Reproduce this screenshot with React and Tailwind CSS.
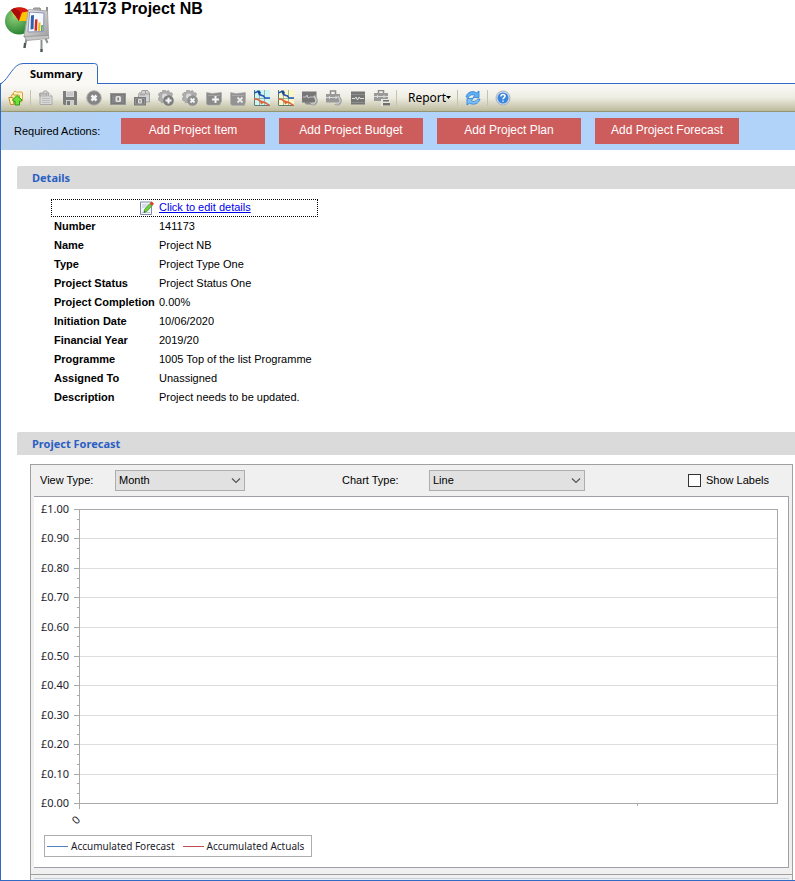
import React from "react";

const Icon = ({ children }) => (
  <svg viewBox="0 0 16 16" className="w-4 h-4" aria-hidden="true">
    {children}
  </svg>
);

const FolderUpIcon = () => (
  <Icon>
    <path d="M5.500 5V2.500L7 1l1.500 1H14l.5 1v8l-2 1.500" fill="#fdf3c0" stroke="#d9a440" />
    <path d="M3 6.500L4.500 4 6 5h5l.5.500V13H3z" fill="#fbe9a5" stroke="#d19a35" />
    <path d="M.8 7.500h4l1.200 7H2.500z" fill="#fff3bd" stroke="#c88d2b" />
    <path d="M9 5.500l5 4.500-1.500 1.500-1-.500v4H7v-4l-1 .500L4.500 10z" fill="#6fe03a" stroke="#2c9a16" />
  </Icon>
);

const NewIcon = () => (
  <Icon>
    <path d="M2 3h3l1-2h3v2h2l3 3v8.500H2z" fill="#d9d9d9" stroke="#a9a9a9" />
    <path d="M1 3h8.500v3.500H1z" fill="#adadad" />
    <path d="M3 5h5" stroke="#cfcfcf" />
    <path d="M10.500 2.500v3.500h3.500" fill="#efefef" stroke="#a9a9a9" />
    <path d="M4 8.500h8M4 10.500h8M4 12.500h8" stroke="#bababa" />
  </Icon>
);

const SaveIcon = () => (
  <Icon>
    <path d="M1 1h13l1 1v13H2l-1-1z" fill="#7d7d7d" />
    <path d="M4 1h8v6H4z" fill="#d9d9d9" />
    <path d="M5 3h6M5 5h6" stroke="#b5b5b5" />
    <path d="M4 10h8v5H4z" fill="#cfcfcf" />
    <path d="M5 11h3v4H5z" fill="#777" />
  </Icon>
);

const CancelIcon = () => (
  <Icon>
    <circle cx="8" cy="8" r="7.300" fill="#858585" stroke="#b4b4b4" />
    <path d="M5.500 5.500l5 5M10.500 5.500l-5 5" stroke="#f5f5f5" strokeWidth="2.600" />
  </Icon>
);

const BudgetIcon = () => (
  <Icon>
    <path d="M0 3h16v12H0z" fill="#969696" />
    <path d="M1.500 4.500h13v9h-13z" fill="#858585" stroke="#777" />
    <rect x="5.500" y="6" width="5.500" height="6" rx="1.500" fill="#e2e2e2" />
    <path d="M8.200 7.500v3" stroke="#777" strokeWidth="1.500" />
  </Icon>
);

const BudgetCopyIcon = () => (
  <Icon>
    <path d="M4.500 7l.5-4h2l1-2.500h5.500l2 2.500v9H4.500z" fill="#d2d2d2" stroke="#a0a0a0" />
    <path d="M6 3.500h5v2H6z" fill="#a8a8a8" />
    <path d="M11.500 1v3h3.500" fill="none" stroke="#a0a0a0" />
    <path d="M0 7h12v8.500H0z" fill="#7b7b7b" />
    <path d="M1.500 8.500h9v5.500h-9z" fill="none" stroke="#949494" />
    <rect x="4" y="9" width="4" height="4.500" rx="1" fill="#dedede" />
    <path d="M6 10v2.500" stroke="#777" />
  </Icon>
);

const gearPath = "M4.500 .5L7 0l1 1.500 2.500-1L12 3l2-.2L14.500 5 13 6.500l1 2-2 4.500H7l-1-1-2.500 1L3 11 .8 10.500.5 8 1.500 6.500 0 4.500 2 2.500h2z";

const GearIcon = ({ badge, children }) => (
  <Icon>
    <path d={gearPath} fill="#adadad" stroke="#949494" strokeWidth=".6" />
    <circle cx="6.800" cy="6.300" r="2.800" fill="#d9d9d9" />
    <circle cx="10.500" cy="10.500" r="5.300" fill={badge} />
    {children}
  </Icon>
);

const GearAddIcon = () => (
  <GearIcon badge="#7c7c7c">
    <path d="M10.500 7.500v6M7.500 10.500h6" stroke="#f6f6f6" strokeWidth="2" />
  </GearIcon>
);

const GearRemoveIcon = () => (
  <GearIcon badge="#8f8f8f">
    <path d="M8.500 8.500l4 4M12.500 8.500l-4 4" stroke="#f3f3f3" strokeWidth="1.800" />
  </GearIcon>
);

const CardAddIcon = () => (
  <Icon>
    <path d="M.5 2.500l5.500 1 9.500-1v9l-2 3.500H2L.5 14z" fill="#8a8a8a" stroke="#a5a5a5" strokeWidth=".6" />
    <path d="M2 5.500h12" stroke="#a4a4a4" />
    <path d="M9.500 6v7M6 9.500h7" stroke="#f3f3f3" strokeWidth="2" />
  </Icon>
);

const CardRemoveIcon = () => (
  <Icon>
    <path d="M.5 2.500l5.500 1 9.500-1v9l-1 4H2L.5 14z" fill="#939393" stroke="#adadad" strokeWidth=".6" />
    <path d="M2 5.500h12" stroke="#a9a9a9" />
    <path d="M7.500 7.500l5 5M12.500 7.500l-5 5" stroke="#e9e9e9" strokeWidth="1.800" />
  </Icon>
);

const PlanChart = ({ fill }) => (
  <Icon>
    <rect width="16" height="16" fill={fill} />
    <path d="M5.500 0v16M10.500 0v16M0 8.500h16" stroke="#7fa79b" strokeWidth=".8" />
    <path d="M.5 0v15.500H16" stroke="#567d76" fill="none" />
    <path d="M0 3l4-1.500L6.500 5l3 1 1.500 2h5" stroke="#2457b8" strokeWidth="1.500" fill="none" />
    <path d="M3.500 0L7 2 5 6z" fill="#17428f" />
    <path d="M0 9l4 .5 3 2.500 4 .5 4.500 3" stroke="#e0653a" strokeWidth="1.600" fill="none" />
    <path d="M6 10l5 2-4 2.500z" fill="#e0653a" />
  </Icon>
);

const LinkRing = () => (
  <>
    <path d="M9 13.500c3 2 6-.5 5.500-3.500L12 5.500" stroke="#a2a2a2" strokeWidth="2.600" fill="none" />
    <path d="M8.500 13c3 2 5.500 0 5.500-3L12 6" stroke="#dcdcdc" strokeWidth="1" fill="none" />
  </>
);

const MonitorLinkIcon = () => (
  <Icon>
    <path d="M0 1.500h14.500v11H0z" fill="#777" />
    <path d="M1 7h3l1-2 1 3 2-1h5" stroke="#c7c7c7" fill="none" />
    <path d="M2 12h8v2.500H4z" fill="#888" />
    <LinkRing />
  </Icon>
);

const CaseLinkIcon = () => (
  <Icon>
    <path d="M4.500 4V1h5v3" stroke="#8d8d8d" strokeWidth="1.500" fill="none" />
    <path d="M0 4h14v8.500H0z" fill="#999" />
    <path d="M0 7.500h14M3.500 6v3M10 6v3" stroke="#dadada" />
    <LinkRing />
  </Icon>
);

const MonitorIcon = () => (
  <Icon>
    <path d="M1 1.500h14v13H1z" fill="#757575" />
    <path d="M1 4.500h14M1 12.500h14" stroke="#8d8d8d" />
    <path d="M2 8.500h3l1-1.500 1.500 3 1.500-3 1 1.500h4" stroke="#e2e2e2" fill="none" />
  </Icon>
);

const CaseRemoveIcon = () => (
  <Icon>
    <path d="M4.500 3V.5h5V3" stroke="#8d8d8d" strokeWidth="1.500" fill="none" />
    <path d="M0 3h14v8H0z" fill="#999" />
    <path d="M0 6.500h14M3.500 5v3M10 5v3" stroke="#dadada" />
    <path d="M7 9h9v7H7z" fill="#e9e8df" />
    <path d="M9 10h6v1.500H9zM9 13h7v2.500H9z" fill="#6f6f6f" />
  </Icon>
);

const RefreshIcon = () => (
  <Icon>
    <path d="M1 7C2 2.500 7 0 11.500 2.800L14 1v6.500H8l1.800-2C7.500 4 4.500 5 3.500 7.500z" fill="#5fb0f5" stroke="#2c7fd6" strokeWidth=".8" />
    <path d="M15 9c-1 4.500-6 6.500-10.500 4.200L2 15V8.500h6.200L6.200 10.700c2.300 1.500 5.300.5 6.300-1.700z" fill="#7cc0f8" stroke="#2c7fd6" strokeWidth=".8" />
  </Icon>
);

const HelpIcon = () => (
  <Icon>
    <circle cx="8" cy="8" r="7" fill="#d5dde8" stroke="#9dabc0" strokeWidth=".9" />
    <circle cx="8" cy="8" r="5.500" fill="#3b86dd" />
    <path d="M6 6.500C6 3.800 10 4 10 6.300c0 1.200-2 1.400-2 2.900M8 10.500v1.300" stroke="#fff" strokeWidth="1.500" fill="none" />
  </Icon>
);

const EditIcon = () => (
  <svg viewBox="0 0 14 14" className="w-3.5 h-3.5" aria-hidden="true">
    <path d="M.5 1h11v12.500H.5z" fill="#f3f5fa" stroke="#7f8ca8" />
    <path d="M2 4h7M2 6h5M2 11.500h8" stroke="#bcc5d6" />
    <path d="M4 11.500l.5-3L10 2.500l2.200 2L6.800 10.500z" fill="#6fd03c" stroke="#3f8f2b" strokeWidth=".7" />
    <path d="M9.800 2.500L11.500.5l2.500 2-1.600 2.200z" fill="#e5392b" />
    <path d="M4 11.500l.3-1.500 1.200 1.100z" fill="#333" />
  </svg>
);

const ProjectLogo = () => (
  <svg viewBox="0 0 48 50" className="w-12 h-[50px]" aria-hidden="true">
    <defs>
      <radialGradient id="pie" cx="35%" cy="35%" r="75%">
        <stop offset="0" stopColor="#8fd07a" />
        <stop offset="1" stopColor="#1c7a28" />
      </radialGradient>
      <linearGradient id="frame" x1="0" y1="0" x2="1" y2="1">
        <stop offset="0" stopColor="#f4f4f4" />
        <stop offset="1" stopColor="#9e9e9e" />
      </linearGradient>
    </defs>
    <ellipse cx="15" cy="17" rx="14" ry="13.500" fill="url(#pie)" />
    <path d="M15 17L7 6C10 3 20 1 26 8z" fill="#d8190f" />
    <path d="M15 17l-8-11 3.500-2 6 4z" fill="#a80c08" />
    <path d="M15 17L18 8.500l6-1c3 2 5 5.500 5 9.500z" fill="#ffc400" />
    <path d="M6.500 6.500l3 5 5.500 5.500z" fill="#ffd21a" />
    <path d="M22.500 35l-2 9M37.500 36v12M41 33l2.500 6" stroke="#8b938c" strokeWidth="2" />
    <path d="M21 39l-.5 5M37.500 45v3" stroke="#4c5b4f" strokeWidth="2.200" />
    <path d="M29 6l1-2h6l1 3" fill="#aaa" stroke="#8b8b8b" />
    <path d="M43 3v6" stroke="#8e8e8e" strokeWidth="2" />
    <path d="M24.500 5.500l19 1.500 1 25-24.500 1z" fill="url(#frame)" stroke="#a8a8a8" />
    <path d="M25.500 8l14.500 1-.5 18.500-15.500.5z" fill="#f5f8ff" stroke="#8c93b8" />
    <path d="M20 32.500l24.500-1 .5 3-22 2z" fill="#c6c6c6" stroke="#888" strokeWidth=".6" />
    <path d="M27 11.500l3-.5-.5 14-3 .5z" fill="#2b62ad" />
    <path d="M31 15.500l2.500-.3-.5 11.500H30.500z" fill="#d62a1d" />
    <path d="M34.500 18.500h2l-.3 8.500H34z" fill="#eeb81c" />
    <path d="M37.300 21h1.500l-.3 6H37z" fill="#3fa045" />
  </svg>
);

const toolbarItems = [
  { label: "New", icon: <NewIcon /> },
  { label: "Save", icon: <SaveIcon /> },
  { label: "Cancel", icon: <CancelIcon /> },
  { label: "Budget", icon: <BudgetIcon /> },
  { label: "Copy budget", icon: <BudgetCopyIcon /> },
  { label: "Add item", icon: <GearAddIcon /> },
  { label: "Remove item", icon: <GearRemoveIcon /> },
  { label: "Add card", icon: <CardAddIcon /> },
  { label: "Remove card", icon: <CardRemoveIcon /> },
  { label: "Plan", icon: <PlanChart fill="#cdf5f2" /> },
  { label: "Plan baseline", icon: <PlanChart fill="#fdf6c4" /> },
  { label: "Link forecast", icon: <MonitorLinkIcon /> },
  { label: "Link case", icon: <CaseLinkIcon /> },
  { label: "Forecast", icon: <MonitorIcon /> },
  { label: "Remove case", icon: <CaseRemoveIcon /> },
];

const actions = ["Add Project Item", "Add Project Budget", "Add Project Plan", "Add Project Forecast"];

const details = [
  ["Number", "141173"],
  ["Name", "Project NB"],
  ["Type", "Project Type One"],
  ["Project Status", "Project Status One"],
  ["Project Completion", "0.00%"],
  ["Initiation Date", "10/06/2020"],
  ["Financial Year", "2019/20"],
  ["Programme", "1005 Top of the list Programme"],
  ["Assigned To", "Unassigned"],
  ["Description", "Project needs to be updated."],
];

const axisLabels = ["£1.00", "£0.90", "£0.80", "£0.70", "£0.60", "£0.50", "£0.40", "£0.30", "£0.20", "£0.10", "£0.00"];

const ToolButton = ({ label, children }) => (
  <button type="button" aria-label={label} className="w-6 h-6 flex items-center justify-center">
    {children}
  </button>
);

const Separator = () => <div className="w-px h-4 ml-0.5 mr-[3px] bg-[#c5c3b0]" />;

const SectionHeader = ({ children }) => (
  <h2 className="ml-4 h-[23px] pl-[15px] pt-0.5 flex items-center rounded-tl-[2px] bg-[#dadada] font-['Noto_Sans',sans-serif] text-[11px] font-bold text-[#2a5fc4]">
    {children}
  </h2>
);

const Select = ({ id, value, className }) => (
  <div className={`relative ${className}`}>
    <select id={id} defaultValue={value} className="block w-full h-[21px] pl-[3px] appearance-none rounded-none border border-[#adadad] bg-[#e1e1e1] text-[11px] text-black">
      <option>{value}</option>
    </select>
    <svg viewBox="0 0 10 6" className="absolute right-1 top-2 w-2.5 h-1.5 pointer-events-none" aria-hidden="true">
      <path d="M1 .5l4 4 4-4" fill="none" stroke="#555" strokeWidth="1.200" />
    </svg>
  </div>
);

const ForecastChart = () => {
  const yFor = (step) => 12 + Math.round(step * 29.4);
  const minorTicks = Array.from({ length: 30 }, (_, i) => i).filter((i) => i % 3 !== 0);

  return (
    <svg viewBox="0 0 754 330" className="block w-full" role="img" aria-label="Project forecast chart">
      <g shapeRendering="crispEdges">
        {axisLabels.slice(1, -1).map((label, i) => (
          <rect key={label} x="46" y={yFor(i + 1)} width="697" height="1" fill="#dedede" />
        ))}
        {axisLabels.map((label, i) => (
          <rect key={label} x="40" y={yFor(i)} width="5" height="1" fill="#a9a9a9" />
        ))}
        {minorTicks.map((i) => (
          <rect key={i} x="43" y={yFor(i / 3)} width="2" height="1" fill="#a9a9a9" />
        ))}
        <rect x="45" y="12" width="699" height="1" fill="#a9a9a9" />
        <rect x="45" y="306" width="699" height="1" fill="#a9a9a9" />
        <rect x="45" y="12" width="1" height="300" fill="#a9a9a9" />
        <rect x="743" y="12" width="1" height="295" fill="#a9a9a9" />
        <rect x="603" y="307" width="1" height="2" fill="#a9a9a9" />
      </g>
      <g className="font-['Noto_Sans',sans-serif] text-[11px]" fill="#1c1c2c">
        {axisLabels.map((label, i) => (
          <text key={label} x="35" y={yFor(i) + 4} textAnchor="end">
            {label}
          </text>
        ))}
        <text x="42" y="327" textAnchor="middle" transform="rotate(-45 42 323)">
          0
        </text>
      </g>
    </svg>
  );
};

const LegendItem = ({ color, children }) => (
  <div className="flex items-center gap-[3px]">
    <span className={`w-[21px] h-px ${color}`} />
    {children}
  </div>
);

const App = () => {
  return (
    <div className="bg-white font-['Liberation_Sans',Arial,sans-serif] text-[11px] text-black">
      {/* Title */}
      <header className="flex h-[63px] pl-1 pt-1 gap-3">
        <ProjectLogo />
        <h1 className="text-base leading-none font-bold -mt-1 pt-px">141173 Project NB</h1>
      </header>

      {/* Tab */}
      <nav className="relative z-10 h-5">
        <button type="button" className="relative w-[100px] h-[21px] pl-[30px] pt-0.5 flex items-center font-['Noto_Sans',sans-serif] text-[11px] font-bold">
          <svg viewBox="0 0 100 21" className="absolute inset-0 w-full h-full" aria-hidden="true">
            <path d="M1 21C9 16 13 .5 23 .5H94.500Q97.500 .5 97.500 3.500V21z" fill="#faf9f6" />
            <path d="M1 20.500C9 16 13 .5 23 .5H94.500Q97.500 .5 97.500 3.500V21" fill="none" stroke="#316ac5" />
          </svg>
          <span className="relative">Summary</span>
        </button>
      </nav>

      <main className="border border-r-0 border-[#316ac5]">
        {/* Toolbar */}
        <div className="h-7 pl-[3px] flex items-center bg-gradient-to-b from-[#faf9f7] via-[#eeede3] to-[#bdbb9c] border-b border-[#94946f]">
          <ToolButton label="Open folder">
            <FolderUpIcon />
          </ToolButton>
          <Separator />
          {toolbarItems.map((item) => (
            <ToolButton key={item.label} label={item.label}>
              {item.icon}
            </ToolButton>
          ))}
          <Separator />
          <button type="button" className="w-[55px] pl-2 flex items-center font-['Noto_Sans',sans-serif] text-xs">
            Report
            <svg viewBox="0 0 5 3" className="w-[5px] h-[3px] shrink-0" aria-hidden="true">
              <path d="M0 0h5L2.500 3z" />
            </svg>
          </button>
          <Separator />
          <ToolButton label="Refresh">
            <RefreshIcon />
          </ToolButton>
          <Separator />
          <ToolButton label="Help">
            <HelpIcon />
          </ToolButton>
        </div>

        {/* Required actions */}
        <div className="h-[38px] pl-[13px] flex items-center bg-gradient-to-r from-[#b8d0ec] to-[#b1d2f9] to-15%">
          <span className="w-[107px]">Required Actions:</span>
          <div className="flex gap-3.5">
            {actions.map((action) => (
              <button key={action} type="button" className="w-36 h-[26px] pb-0.5 bg-[#cd5c5c] text-xs text-white">
                {action}
              </button>
            ))}
          </div>
        </div>

        {/* Details */}
        <section className="pt-4">
          <SectionHeader>Details</SectionHeader>
          <div className="ml-[50px] mt-2.5">
            <div className="w-[267px] h-[18px] pl-[88px] flex items-center gap-[5px] border border-dotted border-black">
              <EditIcon />
              <a href="#edit" className="pb-0.5 text-[#0000ee] underline">
                Click to edit details
              </a>
            </div>
            <table>
              <tbody>
                {details.map(([label, value]) => (
                  <tr key={label} className="leading-[19px]">
                    <th scope="row" className="w-[108px] pl-[3px] text-left font-bold whitespace-nowrap">
                      {label}
                    </th>
                    <td>{value}</td>
                  </tr>
                ))}
              </tbody>
            </table>
          </div>
        </section>

        {/* Project forecast */}
        <section className="pt-[25px]">
          <SectionHeader>Project Forecast</SectionHeader>
          <div className="ml-[29px] mr-0.5 mt-[9px] border border-b-0 border-[#a0a0a0] bg-[#f0f0f0]">
            <div className="h-[31px] pl-[9px] pr-[23px] flex items-center">
              <label htmlFor="view-type" className="w-[75px]">
                View Type:
              </label>
              <Select id="view-type" value="Month" className="w-[130px]" />
              <label htmlFor="chart-type" className="w-[87px] ml-[97px]">
                Chart Type:
              </label>
              <Select id="chart-type" value="Line" className="w-[156px]" />
              <label className="ml-auto flex items-center gap-[5px]">
                <input type="checkbox" className="w-[13px] h-[13px] appearance-none border border-[#333] bg-white" />
                Show Labels
              </label>
            </div>

            <div className="ml-[3px] mr-[3px] pb-2.5 bg-white border border-l-0 border-[#a0a0a8]">
              <ForecastChart />
              <div className="ml-2.5 mt-2 w-[268px] h-[22px] px-0.5 flex items-center gap-2 border border-[#adadad] font-['Noto_Sans',sans-serif] text-[10px] text-[#1c1c2c] whitespace-nowrap">
                <LegendItem color="bg-[#4f81bd]">Accumulated Forecast</LegendItem>
                <LegendItem color="bg-[#c0504d]">Accumulated Actuals</LegendItem>
              </div>
            </div>

            <div className="mt-1.5 h-1.5 border-t border-[#a0a0a0]">
              <div className="mt-[3px] mx-[3px] h-px bg-[#c3d0de]" />
            </div>
          </div>
        </section>
      </main>
    </div>
  );
};

export default App;
